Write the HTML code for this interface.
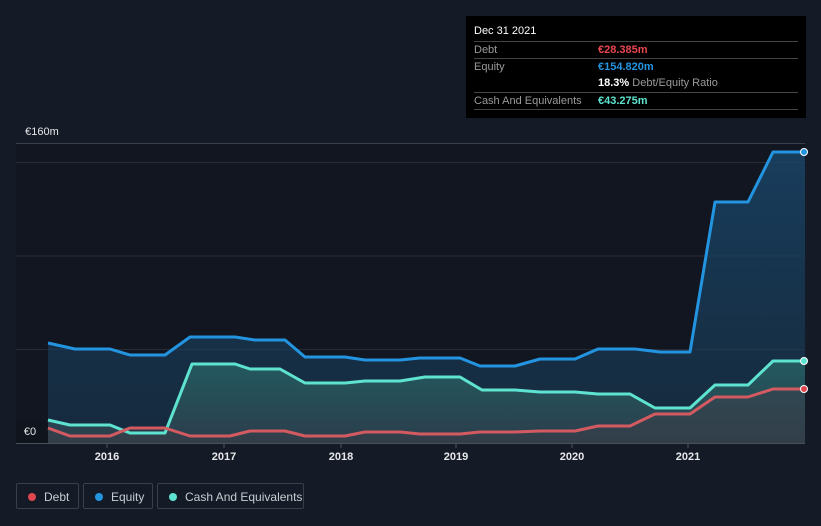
<!DOCTYPE html><html><head><meta charset="utf-8"><style>
body{margin:0;width:821px;height:526px;background:#151b26;font-family:"Liberation Sans",sans-serif;overflow:hidden;position:relative}
.tt{position:absolute;left:466px;top:16px;width:340px;height:102px;background:#000;color:#fff;font-size:11px}
.tt .r{position:absolute;left:8px;right:8px;height:17px;border-top:1px solid #444;padding-top:2px;box-sizing:border-box}
.lab{position:absolute;color:#9a9a9a;left:0}
.val{position:absolute;left:124px;font-weight:bold}
.leg{position:absolute;top:483px;height:26px;border:1px solid #3a404b;border-radius:2px;color:#c8ccd2;font-size:12px;line-height:26px;box-sizing:border-box}
.leg i{position:absolute;left:11px;top:9px;width:8px;height:8px;border-radius:50%}
.leg span{position:absolute;left:27px}
</style></head><body>
<svg width="821" height="526" style="position:absolute;left:0;top:0">
<defs>
<linearGradient id="ge" x1="0" y1="0" x2="0" y2="1"><stop offset="0" stop-color="#1a4a70" stop-opacity=".75"/><stop offset="1" stop-color="#1a3a55" stop-opacity=".55"/></linearGradient>
<linearGradient id="gc" x1="0" y1="0" x2="0" y2="1"><stop offset="0" stop-color="#2c7d75" stop-opacity=".55"/><stop offset="1" stop-color="#3a4a55" stop-opacity=".6"/></linearGradient>
</defs>
<rect x="16" y="143" width="789" height="300" fill="#111620"/>
<line x1="16" y1="143.5" x2="805" y2="143.5" stroke="#3a404a"/>
<g stroke="#262c36"><line x1="16" y1="162.5" x2="805" y2="162.5"/><line x1="16" y1="256" x2="805" y2="256"/><line x1="16" y1="349.5" x2="805" y2="349.5"/></g>
<polygon fill="url(#ge)" points="48,443 48,343 75,349 110,349 130,355 165,355 190,337 235,337 255,340 285,340 305,357 345,357 365,360 400,360 420,358 460,358 480,366 515,366 540,359 575,359 598,349 635,349 660,352 690,352 715,202 748,202 773,152 805,152 805,443"/>
<polygon fill="url(#gc)" points="48,443 48,420 70,425 110,425 130,433 165,433 192,364 235,364 250,369 280,369 305,383 345,383 365,381 400,381 425,377 460,377 482,390 515,390 540,392 575,392 598,394 630,394 655,408 690,408 715,385 748,385 773,361 805,361 805,443"/>
<polygon fill="#3a3f4a" fill-opacity=".5" points="48,443 48,428 70,436 110,436 130,428 165,428 190,436 230,436 250,431 285,431 305,436 345,436 365,432 400,432 420,434 460,434 480,432 515,432 540,431 575,431 598,426 630,426 655,414 690,414 715,397 748,397 773,389 805,389 805,443"/>
<rect x="16" y="420" width="32" height="23" fill="#10141c"/>
<g fill="none" stroke-width="3" stroke-linejoin="round">
<polyline stroke="#2394e0" points="48,343 75,349 110,349 130,355 165,355 190,337 235,337 255,340 285,340 305,357 345,357 365,360 400,360 420,358 460,358 480,366 515,366 540,359 575,359 598,349 635,349 660,352 690,352 715,202 748,202 773,152 805,152"/>
<polyline stroke="#5de3cf" points="48,420 70,425 110,425 130,433 165,433 192,364 235,364 250,369 280,369 305,383 345,383 365,381 400,381 425,377 460,377 482,390 515,390 540,392 575,392 598,394 630,394 655,408 690,408 715,385 748,385 773,361 805,361"/>
<polyline stroke="#d35a60" points="48,428 70,436 110,436 130,428 165,428 190,436 230,436 250,431 285,431 305,436 345,436 365,432 400,432 420,434 460,434 480,432 515,432 540,431 575,431 598,426 630,426 655,414 690,414 715,397 748,397 773,389 805,389"/>
</g>
<circle cx="804" cy="152" r="3.5" fill="#2394e0" stroke="#fff"/>
<circle cx="804" cy="361" r="3.5" fill="#5de3cf" stroke="#fff"/>
<circle cx="804" cy="389" r="3.5" fill="#e0474f" stroke="#fff"/>
<line x1="16" y1="443.5" x2="805" y2="443.5" stroke="#4a505a"/>
<g stroke="#4a505a"><line x1="107" y1="443" x2="107" y2="448"/><line x1="224" y1="443" x2="224" y2="448"/><line x1="341" y1="443" x2="341" y2="448"/><line x1="456" y1="443" x2="456" y2="448"/><line x1="572" y1="443" x2="572" y2="448"/><line x1="688" y1="443" x2="688" y2="448"/></g>
<g fill="#e6e8eb" font-size="11" font-family="Liberation Sans,sans-serif" text-anchor="middle" font-weight="bold">
<text x="107" y="460">2016</text><text x="224" y="460">2017</text><text x="341" y="460">2018</text><text x="456" y="460">2019</text><text x="572" y="460">2020</text><text x="688" y="460">2021</text></g>
<g fill="#e6e8eb" font-size="11" font-family="Liberation Sans,sans-serif" text-anchor="middle">
<text x="42" y="135">€160m</text><text x="30" y="435">€0</text></g>
</svg>
<div class="tt">
<div style="position:absolute;left:8px;top:9px">Dec 31 2021</div>
<div class="r" style="top:25px"><span class="lab">Debt</span><span class="val" style="color:#e8474f">€28.385m</span></div>
<div class="r" style="top:42px"><span class="lab">Equity</span><span class="val" style="color:#2394e0">€154.820m</span></div>
<div style="position:absolute;left:132px;top:61px"><b>18.3%</b> <span style="color:#9a9a9a">Debt/Equity Ratio</span></div>
<div class="r" style="top:76px"><span class="lab">Cash And Equivalents</span><span class="val" style="color:#5de3cf">€43.275m</span></div>
<div class="r" style="top:93px;height:0"></div>
</div>
<div class="leg" style="left:16px;width:63px"><i style="background:#e0474f"></i><span>Debt</span></div>
<div class="leg" style="left:83px;width:70px"><i style="background:#2394e0"></i><span>Equity</span></div>
<div class="leg" style="left:157px;width:147px"><i style="background:#5de3cf"></i><span>Cash And Equivalents</span></div>
</body></html>
